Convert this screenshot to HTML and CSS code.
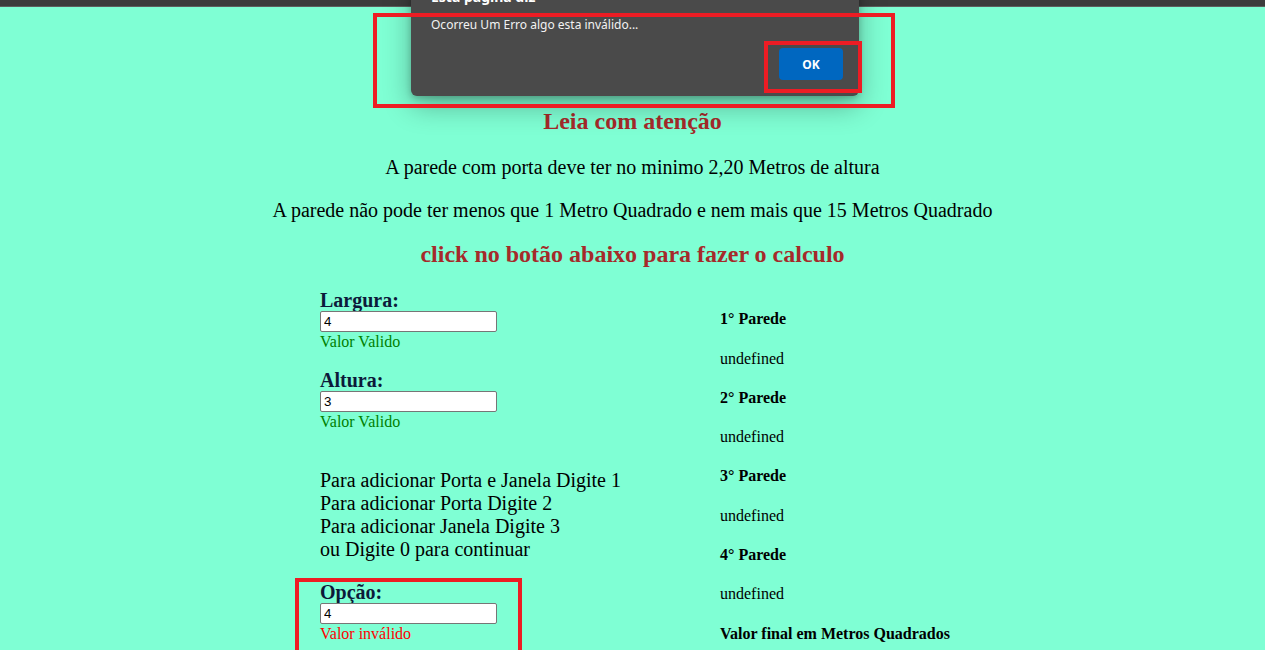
FILE: index.html
```html
<!DOCTYPE html>
<html lang="pt">
<head>
<meta charset="utf-8">
<title>Calculo de Paredes</title>
<link rel="stylesheet" href="styles.css">
</head>
<body>
<div class="topbar"></div>
<main class="page">
  <h2 class="warn">Leia com atenção</h2>
  <p class="rule">A parede com porta deve ter no minimo 2,20 Metros de altura</p>
  <p class="rule rule-last">A parede não pode ter menos que 1 Metro Quadrado e nem mais que 15 Metros Quadrado</p>
  <h2 class="warn">click no botão abaixo para fazer o calculo</h2>
  <div class="cols">
    <div class="left">
      <div class="field">
        <label class="lbl">Largura:</label>
        <input class="inp" type="text" value="4">
        <span class="ok">Valor Valido</span>
      </div>
      <div class="field">
        <label class="lbl">Altura:</label>
        <input class="inp" type="text" value="3">
        <span class="ok">Valor Valido</span>
      </div>
      <p class="options">Para adicionar Porta e Janela Digite 1<br>Para adicionar Porta Digite 2<br>Para adicionar Janela Digite 3<br>ou Digite 0 para continuar</p>
      <div class="field">
        <label class="lbl">Opção:</label>
        <input class="inp" type="text" value="4">
        <span class="bad">Valor inválido</span>
      </div>
    </div>
    <div class="right">
      <h4 class="wall">1° Parede</h4>
      <p class="val">undefined</p>
      <h4 class="wall">2° Parede</h4>
      <p class="val">undefined</p>
      <h4 class="wall">3° Parede</h4>
      <p class="val">undefined</p>
      <h4 class="wall">4° Parede</h4>
      <p class="val">undefined</p>
      <h4 class="wall">Valor final em Metros Quadrados</h4>
    </div>
  </div>
</main>
<div class="dialog">
  <div class="dlg-title">Esta página diz</div>
  <div class="dlg-msg">Ocorreu Um Erro algo esta inválido...</div>
  <div class="dlg-actions"><button class="dlg-ok">OK</button></div>
</div>
<div class="mark mark-dialog"></div>
<div class="mark mark-ok"></div>
<div class="mark mark-opcao"></div>
</body>
</html>
```
FILE: styles.css
```css
html, body {
  margin: 0;
  padding: 0;
  height: 100%;
  overflow: hidden;
}
body {
  background: #7fffd4;
  font-family: "Liberation Serif", "Times New Roman", serif;
  color: #000;
}
.topbar {
  height: 6px;
  background: #3c3c3c;
  border-bottom: 1px solid #5e5e5e;
}
.page {
  padding-top: 100px;
}
.warn {
  margin: 0 0 21px;
  text-align: center;
  font-size: 24px;
  line-height: 28px;
  color: #a52a2a;
  font-weight: bold;
}
.rule {
  margin: 0 0 20px;
  text-align: center;
  font-size: 20px;
  line-height: 23px;
}
.rule-last {
  margin-bottom: 18px;
}
.cols {
  display: grid;
  grid-template-columns: 400px 1fr;
  padding-left: 320px;
}
.left {
  display: flex;
  flex-direction: column;
}
.field {
  display: flex;
  flex-direction: column;
  align-items: flex-start;
  margin-bottom: 38px;
}
.field:first-child {
  margin-bottom: 18px;
}
.lbl {
  font-size: 20px;
  line-height: 22px;
  font-weight: bold;
  color: #0c1a3a;
}
.inp {
  box-sizing: border-box;
  width: 177px;
  height: 21px;
  margin: 0;
  padding: 1px 3px;
  border: 1px solid #767676;
  border-radius: 2px;
  background: #fff;
  font-family: "Liberation Sans", Arial, sans-serif;
  font-size: 13.33px;
  color: #000;
}
.ok, .bad {
  font-size: 16px;
  line-height: 19px;
}
.ok { color: #008000; }
.bad { color: #ff0000; }
.options {
  margin: 0 0 20px;
  font-size: 20px;
  line-height: 23px;
}
.wall {
  margin: 21.3px 0;
  font-size: 16px;
  line-height: 18px;
  font-weight: bold;
}
.val {
  margin: 21.3px 0;
  font-size: 16px;
  line-height: 18px;
}
.dialog {
  position: absolute;
  left: 411px;
  top: -32px;
  width: 448px;
  box-sizing: border-box;
  padding: 20px 20px 16px;
  background: #4a4a4a;
  border-radius: 0 0 6px 6px;
  box-shadow: 0 10px 28px rgba(0, 0, 0, 0.3), 0 2px 6px rgba(0, 0, 0, 0.2);
  font-family: "Noto Sans", "Open Sans", sans-serif;
  color: #fff;
}
.dlg-title {
  font-size: 14px;
  line-height: 18px;
  font-weight: bold;
  margin-bottom: 11px;
}
.dlg-msg {
  font-size: 12px;
  line-height: 16px;
  color: #f2f2f2;
  margin-bottom: 15px;
}
.dlg-actions {
  display: flex;
  justify-content: flex-end;
}
.dlg-ok {
  width: 64px;
  height: 32px;
  margin-right: -4px;
  border: none;
  border-radius: 4px;
  background: #0067c0;
  color: #fff;
  font-family: "Noto Sans", "Open Sans", sans-serif;
  font-size: 12px;
  font-weight: bold;
}
.mark {
  position: absolute;
  border: 4px solid #ed1c24;
  box-sizing: border-box;
}
.mark-dialog {
  left: 373px;
  top: 13px;
  width: 522px;
  height: 95px;
}
.mark-ok {
  left: 764px;
  top: 41px;
  width: 98px;
  height: 52px;
}
.mark-opcao {
  left: 295px;
  top: 578px;
  width: 227px;
  height: 80px;
}
```
